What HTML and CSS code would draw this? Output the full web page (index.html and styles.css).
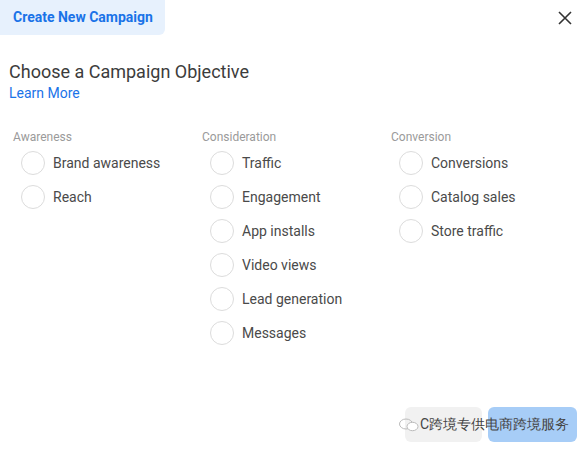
FILE: index.html
```html
<!DOCTYPE html>
<html lang="en">
  <head>
    <meta charset="UTF-8" />
    <meta name="viewport" content="width=device-width, initial-scale=1.0" />
    <title>Create New Campaign</title>
    <link rel="stylesheet" href="styles.css">
  </head>
  <body>
    <div class="dialog">
      <div class="dialog-header">
        <div class="tab">Create New Campaign</div>
        <button class="close" aria-label="Close">
          <svg width="14" height="14" viewBox="0 0 14 14">
            <path d="M1 1L13 13M13 1L1 13" stroke="#333" stroke-width="1.6" fill="none" />
          </svg>
        </button>
      </div>

      <div class="intro">
        <h2>Choose a Campaign Objective</h2>
        <a href="#" class="learn">Learn More</a>
      </div>

      <div class="objectives">
        <div class="group">
          <div class="group-title">Awareness</div>
          <label class="option"><span class="radio"></span>Brand awareness</label>
          <label class="option"><span class="radio"></span>Reach</label>
        </div>
        <div class="group">
          <div class="group-title">Consideration</div>
          <label class="option"><span class="radio"></span>Traffic</label>
          <label class="option"><span class="radio"></span>Engagement</label>
          <label class="option"><span class="radio"></span>App installs</label>
          <label class="option"><span class="radio"></span>Video views</label>
          <label class="option"><span class="radio"></span>Lead generation</label>
          <label class="option"><span class="radio"></span>Messages</label>
        </div>
        <div class="group">
          <div class="group-title">Conversion</div>
          <label class="option"><span class="radio"></span>Conversions</label>
          <label class="option"><span class="radio"></span>Catalog sales</label>
          <label class="option"><span class="radio"></span>Store traffic</label>
        </div>
      </div>

      <div class="dialog-footer">
        <button class="btn btn-cancel" aria-label="Cancel"></button>
        <button class="btn btn-continue" aria-label="Continue"></button>
        <div class="watermark">
          <svg width="20" height="14" viewBox="0 0 20 14">
            <ellipse cx="7" cy="6" rx="6.5" ry="5" fill="none" stroke="#bbb" stroke-width="1" />
            <ellipse cx="13.5" cy="8.5" rx="5.5" ry="4.2" fill="#fff" stroke="#bbb" stroke-width="1" />
          </svg>
          <span>C跨境专供电商跨境服务</span>
        </div>
      </div>
    </div>
  </body>
</html>
```

FILE: styles.css
```css
* {
  margin: 0;
  padding: 0;
  box-sizing: border-box;
  font-family: Roboto, "Liberation Sans", Arial, sans-serif;
}

body {
  background: #fff;
  width: 586px;
  height: 450px;
  overflow: hidden;
}

.dialog {
  width: 586px;
  height: 450px;
  display: flex;
  flex-direction: column;
}

.dialog-header {
  display: flex;
  justify-content: space-between;
  align-items: flex-start;
}

.tab {
  width: 165px;
  height: 35px;
  background: #e7f1fd;
  color: #1a73e8;
  font-weight: bold;
  font-size: 14px;
  line-height: 35px;
  padding-left: 13px;
  border-radius: 0 0 6px 0;
}

.close {
  background: none;
  border: none;
  margin: 11px 14px 0 0;
  width: 14px;
  height: 14px;
  cursor: pointer;
}

.intro {
  padding: 26px 0 0 9px;
}

.intro h2 {
  font-size: 18px;
  font-weight: normal;
  color: #3c3c3c;
  line-height: 22px;
}

.learn {
  display: block;
  color: #1a73e8;
  font-size: 14px;
  text-decoration: none;
  line-height: 18px;
  margin-top: 1px;
}

.objectives {
  display: flex;
  padding: 28px 0 0 13px;
}

.group {
  width: 189px;
  display: flex;
  flex-direction: column;
}

.group-title {
  font-size: 12px;
  color: #9a9a9a;
  line-height: 14px;
  margin-bottom: 2px;
}

.option {
  display: flex;
  align-items: center;
  height: 34px;
  font-size: 14px;
  color: #4a4a4a;
  padding-left: 8px;
}

.radio {
  width: 24px;
  height: 24px;
  border: 1px solid #dcdcdc;
  border-radius: 50%;
  margin-right: 8px;
}

.dialog-footer {
  margin-top: auto;
  display: flex;
  justify-content: flex-end;
  gap: 6px;
  padding: 0 9px 8px 0;
  position: relative;
}

.btn {
  height: 35px;
  border: none;
  border-radius: 6px;
}

.btn-cancel {
  width: 77px;
  background: #f1f1f1;
}

.btn-continue {
  width: 89px;
  background: #a7cdf7;
}

.watermark {
  position: absolute;
  left: 399px;
  top: 0;
  height: 35px;
  display: flex;
  align-items: center;
  gap: 1px;
  font-size: 14px;
  color: #444;
  white-space: nowrap;
  font-family: Roboto, "Noto Sans CJK SC", sans-serif;
}
```
